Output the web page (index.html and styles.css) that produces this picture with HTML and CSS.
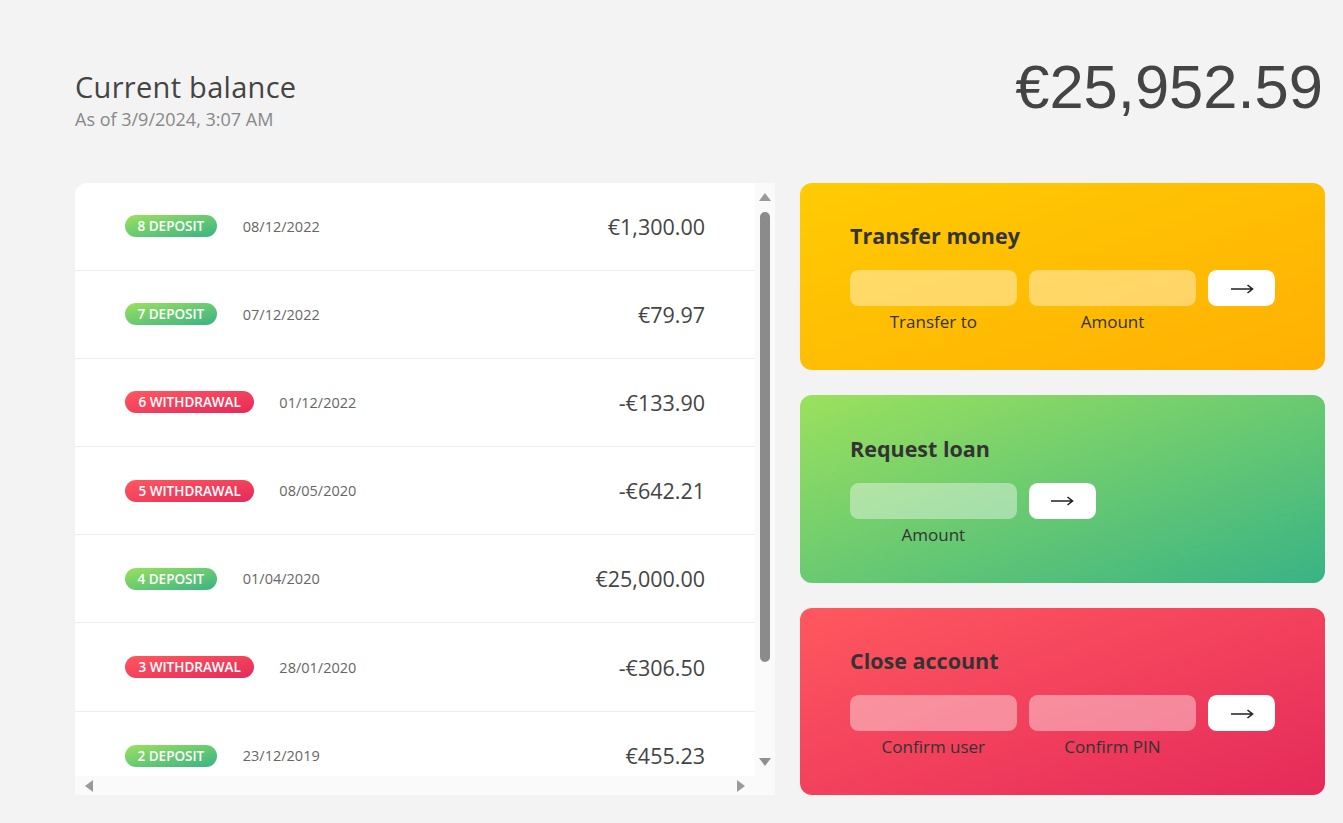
FILE: index.html
```html
<!DOCTYPE html>
<html lang="en">
<head>
<meta charset="utf-8">
<title>Bankist</title>
<link rel="stylesheet" href="styles.css">
</head>
<body>
<main class="app">
  <div class="balance">
    <div class="balance-info">
      <p class="balance-label">Current balance</p>
      <p class="balance-date">As of <span>3/9/2024, 3:07 AM</span></p>
    </div>
    <p class="balance-value">€25,952.59</p>
  </div>

  <div class="movements">
    <div class="movements-list">
      <div class="row"><span class="type type-deposit">8 deposit</span><span class="date">08/12/2022</span><span class="value">€1,300.00</span></div>
      <div class="row"><span class="type type-deposit">7 deposit</span><span class="date">07/12/2022</span><span class="value">€79.97</span></div>
      <div class="row"><span class="type type-withdrawal">6 withdrawal</span><span class="date">01/12/2022</span><span class="value">-€133.90</span></div>
      <div class="row"><span class="type type-withdrawal">5 withdrawal</span><span class="date">08/05/2020</span><span class="value">-€642.21</span></div>
      <div class="row"><span class="type type-deposit">4 deposit</span><span class="date">01/04/2020</span><span class="value">€25,000.00</span></div>
      <div class="row"><span class="type type-withdrawal">3 withdrawal</span><span class="date">28/01/2020</span><span class="value">-€306.50</span></div>
      <div class="row row-last"><span class="type type-deposit">2 deposit</span><span class="date">23/12/2019</span><span class="value">€455.23</span></div>
    </div>
    <div class="vscroll">
      <span class="arrow arrow-up"></span>
      <span class="thumb"></span>
      <span class="arrow arrow-down"></span>
    </div>
    <div class="hscroll">
      <span class="arrow arrow-left"></span>
      <span class="arrow arrow-right"></span>
    </div>
    <div class="corner"></div>
  </div>

  <div class="operation operation-transfer">
    <h2>Transfer money</h2>
    <form class="form form-3">
      <input type="text" class="input">
      <input type="number" class="input">
      <button type="button" class="btn" aria-label="Transfer"><svg class="btn-arrow" width="24" height="12" viewBox="0 0 24 12"><path d="M1 6 H22.5 M17.5 2 L22.5 6 L17.5 10" fill="none" stroke="#222" stroke-width="1.6"/></svg></button>
      <label class="label">Transfer to</label>
      <label class="label">Amount</label>
    </form>
  </div>

  <div class="operation operation-loan">
    <h2>Request loan</h2>
    <form class="form form-loan">
      <input type="number" class="input">
      <button type="button" class="btn" aria-label="Request"><svg class="btn-arrow" width="24" height="12" viewBox="0 0 24 12"><path d="M1 6 H22.5 M17.5 2 L22.5 6 L17.5 10" fill="none" stroke="#222" stroke-width="1.6"/></svg></button>
      <label class="label label-loan">Amount</label>
    </form>
  </div>

  <div class="operation operation-close">
    <h2>Close account</h2>
    <form class="form form-3">
      <input type="text" class="input">
      <input type="password" class="input">
      <button type="button" class="btn" aria-label="Close"><svg class="btn-arrow" width="24" height="12" viewBox="0 0 24 12"><path d="M1 6 H22.5 M17.5 2 L22.5 6 L17.5 10" fill="none" stroke="#222" stroke-width="1.6"/></svg></button>
      <label class="label">Confirm user</label>
      <label class="label">Confirm PIN</label>
    </form>
  </div>
</main>
</body>
</html>
```

FILE: styles.css
```css
* { box-sizing: border-box; margin: 0; padding: 0; }

html, body {
  background: #f3f3f3;
  color: #444;
  font-family: "Open Sans", "Liberation Sans", sans-serif;
}

body { padding: 0 18px 0 75px; }

.app {
  width: 1250px;
  display: grid;
  grid-template-columns: 700px 525px;
  grid-template-rows: auto repeat(3, 187.5px);
  column-gap: 25px;
  row-gap: 25px;
  padding-top: 56px;
}

.balance {
  grid-column: 1 / span 2;
  display: flex;
  justify-content: space-between;
  align-items: flex-end;
  margin-bottom: 26px;
}

.balance-label {
  font-size: 29px;
  font-weight: 500;
  letter-spacing: 0.3px;
  line-height: 41px;
  color: #444;
}

.balance-date {
  font-size: 18px;
  line-height: 26px;
  color: #888;
  margin-top: -1px;
}

.balance-value {
  font-family: "Liberation Sans", Arial, sans-serif;
  font-size: 61.5px;
  line-height: 1;
  font-weight: 400;
  color: #444;
  margin-bottom: 14px;
  margin-right: 2px;
}

.movements {
  grid-row: 2 / span 3;
  display: grid;
  grid-template-columns: 1fr 20px;
  grid-template-rows: 1fr 19px;
  background: #fff;
  border-radius: 12px 0 0 0;
  overflow: hidden;
}

.movements-list {
  overflow: hidden;
  min-height: 0;
}

.row {
  height: 88.2px;
  padding: 0 50px;
  display: flex;
  align-items: center;
  border-bottom: 1px solid #eee;
}

.row-last { border-bottom: none; }

.type {
  font-size: 13.5px;
  font-weight: 600;
  text-transform: uppercase;
  color: #fff;
  padding: 2px 12.5px;
  line-height: 18px;
  border-radius: 100px;
  margin-right: 26px;
}

.type-withdrawal { padding: 2px 13.5px; margin-right: 25px; }

.type-deposit { background-image: linear-gradient(to top left, #39b385, #9be15d); }
.type-withdrawal { background-image: linear-gradient(to top left, #e52a5a, #ff585f); }

.date {
  font-size: 14.5px;
  font-weight: 500;
  color: #666;
}

.value {
  margin-left: auto;
  font-size: 21.5px;
  color: #444;
}

/* scrollbars */
.vscroll {
  background: #fafafa;
  display: flex;
  flex-direction: column;
  align-items: center;
  padding: 10px 0 10px;
}

.thumb {
  width: 10px;
  height: 450px;
  margin: 11px 0 auto;
  background: #8b8b8b;
  border-radius: 5px;
}

.hscroll {
  background: #fafafa;
  display: flex;
  justify-content: space-between;
  align-items: center;
  padding: 0 10px;
}

.corner { background: #fafafa; }

.arrow { width: 0; height: 0; display: block; }
.arrow-up {
  border-left: 6px solid transparent;
  border-right: 6px solid transparent;
  border-bottom: 8px solid #9a9a9a;
}
.arrow-down {
  border-left: 6px solid transparent;
  border-right: 6px solid transparent;
  border-top: 8px solid #8f8f8f;
}
.arrow-left {
  border-top: 6px solid transparent;
  border-bottom: 6px solid transparent;
  border-right: 8px solid #9a9a9a;
}
.arrow-right {
  border-top: 6px solid transparent;
  border-bottom: 6px solid transparent;
  border-left: 8px solid #9a9a9a;
}

/* operations */
.operation {
  border-radius: 12px;
  padding: 37.5px 50px;
  color: #333;
}

.operation h2 {
  font-size: 21.5px;
  font-weight: 700;
  line-height: 31px;
  margin-bottom: 19px;
  color: #333;
}

.operation-transfer { background-image: linear-gradient(to top left, #ffb003, #ffcb03); }
.operation-loan { background-image: linear-gradient(to top left, #39b385, #9be15d); }
.operation-close { background-image: linear-gradient(to top left, #e52a5a, #ff585f); }

.form {
  display: grid;
  grid-template-rows: auto auto;
  column-gap: 12.5px;
  row-gap: 5px;
}

.form-3 { grid-template-columns: 2.5fr 2.5fr 1fr; }
.form-loan { grid-template-columns: 2.5fr 1fr 2.5fr; }
.label-loan { grid-column: 1; grid-row: 2; }

.input {
  width: 100%;
  height: 36px;
  border: none;
  border-radius: 8.75px;
  background: rgba(255, 255, 255, 0.4);
  font-family: inherit;
  font-size: 18px;
  color: #333;
  padding: 0 12px;
  outline: none;
}

.btn {
  height: 36px;
  border: none;
  border-radius: 8.75px;
  background: #fff;
  cursor: pointer;
  display: flex;
  align-items: center;
  justify-content: center;
}

.btn-arrow { display: block; margin-top: 1px; }

.label {
  font-size: 17px;
  line-height: 22px;
  text-align: center;
  color: #333;
}
```
